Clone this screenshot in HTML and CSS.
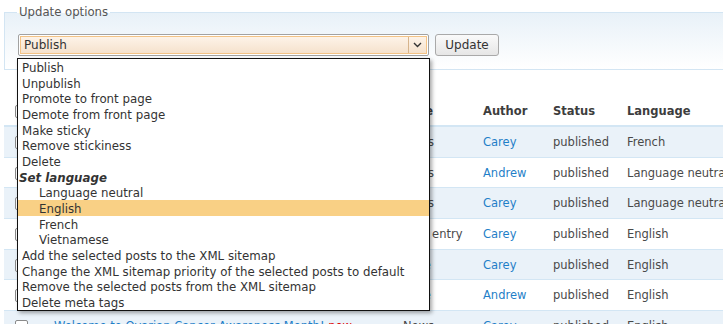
FILE: index.html
```html
<!DOCTYPE html>
<html>
<head>
<meta charset="utf-8">
<link rel="stylesheet" href="styles.css">
</head>
<body>
<div class="page">
  <fieldset class="options">
    <legend class="options-legend">Update options</legend>
    <div class="controls">
      <div class="select">
        <div class="select-inner">
          <span class="select-value">Publish</span>
          <span class="select-arrow">
            <svg width="9" height="6" viewBox="0 0 9 6"><path d="M1 1 L4.5 4.5 L8 1" fill="none" stroke="#333" stroke-width="1.4"/></svg>
          </span>
        </div>
      </div>
      <button class="btn">Update</button>
    </div>
  </fieldset>

  <table class="posts">
    <colgroup>
      <col class="c-check"><col class="c-title"><col class="c-type"><col class="c-author"><col class="c-status"><col class="c-lang">
    </colgroup>
    <thead>
      <tr><th class="check"><span class="cb"></span></th><th>Title</th><th>Type</th><th>Author</th><th>Status</th><th>Language</th></tr>
    </thead>
    <tbody>
      <tr class="odd"><td class="check"><span class="cb"></span></td><td><a>Breast Cancer Awareness</a></td><td>News</td><td><a>Carey</a></td><td>published</td><td>French</td></tr>
      <tr><td class="check"><span class="cb"></span></td><td><a>Foundation update</a></td><td>News</td><td><a>Andrew</a></td><td>published</td><td>Language neutral</td></tr>
      <tr class="odd"><td class="check"><span class="cb"></span></td><td><a>Research grants announced</a></td><td>News</td><td><a>Carey</a></td><td>published</td><td>Language neutral</td></tr>
      <tr><td class="check"><span class="cb"></span></td><td><a>Walk for the cure</a></td><td>Blog entry</td><td><a>Carey</a></td><td>published</td><td>English</td></tr>
      <tr class="odd"><td class="check"><span class="cb"></span></td><td><a>About us</a></td><td><a>Page</a></td><td><a>Carey</a></td><td>published</td><td>English</td></tr>
      <tr><td class="check"><span class="cb"></span></td><td><a>Contact</a></td><td><a>Page</a></td><td><a>Andrew</a></td><td>published</td><td>English</td></tr>
      <tr class="odd"><td class="check"><span class="cb"></span></td><td><a>Welcome to Ovarian Cancer Awareness Month!</a> <span class="new">new</span></td><td>News</td><td><a>Carey</a></td><td>published</td><td>English</td></tr>
    </tbody>
  </table>

  <ul class="dropdown">
    <li>Publish</li>
    <li>Unpublish</li>
    <li>Promote to front page</li>
    <li>Demote from front page</li>
    <li>Make sticky</li>
    <li>Remove stickiness</li>
    <li>Delete</li>
    <li class="group">Set language</li>
    <li class="sub">Language neutral</li>
    <li class="sub active">English</li>
    <li class="sub">French</li>
    <li class="sub">Vietnamese</li>
    <li>Add the selected posts to the XML sitemap</li>
    <li>Change the XML sitemap priority of the selected posts to default</li>
    <li>Remove the selected posts from the XML sitemap</li>
    <li>Delete meta tags</li>
  </ul>
</div>
</body>
</html>
```
FILE: styles.css
```css
html, body {
  margin: 0;
  padding: 0;
  background: #fff;
  overflow: hidden;
}
body {
  font-family: "DejaVu Sans", Verdana, sans-serif;
  font-size: 11.5px;
  color: #494949;
  width: 723px;
  height: 324px;
}
.page {
  position: relative;
  width: 723px;
  height: 324px;
  overflow: hidden;
}
.options {
  margin: 5px 0 0 4px;
  width: 780px;
  padding: 15px 0 12px 13px;
  border: 1px solid #d3e5f3;
  background: linear-gradient(#e8f1f8, #ffffff);
  box-sizing: border-box;
  height: 65px;
}
.options-legend {
  padding: 0 2px;
  margin-left: -1px;
  line-height: 14px;
  font-size: 11.7px;
  color: #555;
}
.controls {
  display: flex;
  align-items: center;
  gap: 6px;
}
.select {
  width: 411px;
  height: 22px;
  box-sizing: border-box;
  border: 1px solid #a2a2a2;
  border-radius: 2px;
  padding: 1px;
  background: #fff;
}
.select-inner {
  height: 18px;
  box-sizing: border-box;
  border: 1px solid #f3c386;
  background: linear-gradient(#fdf3e8, #f5e2cd);
  display: flex;
  align-items: center;
}
.select-value {
  flex: 1;
  padding-left: 3px;
  color: #333;
  font-size: 12px;
}
.select-arrow {
  width: 17px;
  height: 16px;
  border-left: 1px solid #d6b48c;
  display: flex;
  align-items: center;
  justify-content: center;
}
.btn {
  font-family: inherit;
  font-size: 12px;
  color: #333;
  height: 22px;
  width: 64px;
  border: 1px solid #a9a9a9;
  border-radius: 3px;
  background: linear-gradient(#fafafa, #e6e6e6);
  padding: 0;
}
.posts {
  margin: 26px 0 0 4px;
  width: 780px;
  border-collapse: collapse;
  table-layout: fixed;
}
.c-check { width: 40px; }
.c-title { width: 349px; }
.c-type { width: 80px; }
.c-author { width: 70px; }
.c-status { width: 74px; }
.c-lang { width: 167px; }
.posts th {
  text-align: left;
  font-weight: bold;
  color: #3d3d3d;
  height: 29px;
  padding: 0 10px;
  border-bottom: 2px solid #d3e6f4;
  white-space: nowrap;
}
.posts td {
  height: 29.7px;
  padding: 0 10px;
  border-bottom: 1px solid #d3e6f4;
  white-space: nowrap;
  overflow: hidden;
}
.posts tr.odd td {
  background: #eaf2f9;
}
.posts .check {
  padding-left: 11px;
}
.posts a {
  color: #1f7fc8;
  text-decoration: none;
}
.new {
  color: #e00000;
}
.cb {
  display: inline-block;
  width: 11px;
  height: 11px;
  border: 1px solid #8a8a8a;
  border-radius: 2px;
  background: #fff;
  vertical-align: middle;
}
.dropdown {
  position: absolute;
  left: 17px;
  top: 58px;
  width: 413px;
  box-sizing: border-box;
  margin: 0;
  padding: 0;
  list-style: none;
  border: 1px solid #111;
  background: #fff;
  box-shadow: 2px 2px 4px rgba(0, 0, 0, 0.35);
  color: #333;
  font-size: 11.8px;
}
.dropdown li {
  height: 15.67px;
  line-height: 18px;
  padding-left: 4px;
  white-space: nowrap;
}
.dropdown li.group {
  font-weight: bold;
  font-style: italic;
  padding-left: 1px;
}
.dropdown li.sub {
  padding-left: 21px;
}
.dropdown li.active {
  background: #f9d085;
}
```
